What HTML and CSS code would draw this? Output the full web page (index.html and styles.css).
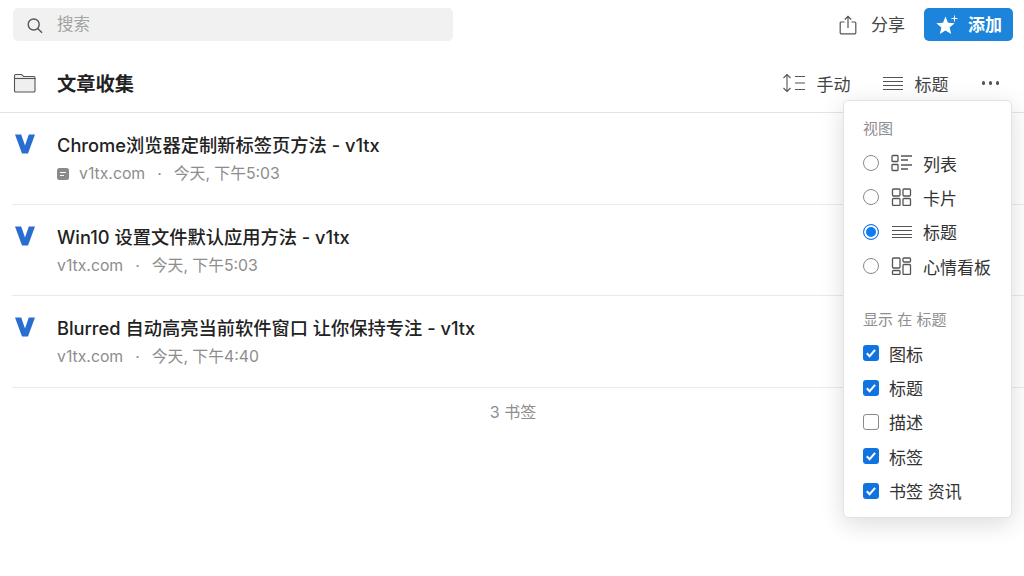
FILE: index.html
```html
<!DOCTYPE html>
<html lang="zh-CN">
<head>
    <meta charset="UTF-8">
    <title>文章收集</title>
    <link rel="stylesheet" href="styles.css">
</head>
<body>
    <div class="topbar">
        <div class="search">
            <svg class="search-icon" width="18" height="18" viewBox="0 0 18 18"><circle cx="7.700" cy="8.500" r="5.500"/><path d="M11.700 12.500l4.300 4.300"/></svg>
            <span class="lift">搜索</span>
        </div>
        <div class="share">
            <svg width="18" height="20" viewBox="0 0 18 20"><path d="M5.500 7H2.200a1 1 0 0 0-1 1v9.800a1 1 0 0 0 1 1h13.600a1 1 0 0 0 1-1V8a1 1 0 0 0-1-1h-3.300"/><path d="M9 13V1.500M5.800 4.500L9 1.300l3.200 3.200"/></svg>
            <span class="lift">分享</span>
        </div>
        <button class="add-btn">
            <svg width="24" height="22" viewBox="0 0 24 22"><path class="star" d="M10.500 2.500l2.500 6.200 6.700.5-5.100 4.300 1.600 6.500-5.700-3.500-5.700 3.500 1.600-6.500L1.300 9.200 8 8.700z"/><path class="plus" d="M19.500 1.500v6M16.500 4.500h6"/></svg>
            <span class="lift">添加</span>
        </button>
    </div>

    <div class="header">
        <svg class="folder" width="24" height="20" viewBox="0 0 24 20"><path d="M1.500 4V2.800a1.300 1.300 0 0 1 1.300-1.300h5.400c.7 0 1 .3 1.400.8l1 1.200h10.100a1.300 1.300 0 0 1 1.300 1.300v12.900a1.300 1.300 0 0 1-1.300 1.300H2.800a1.300 1.300 0 0 1-1.300-1.300z"/><path class="fold" d="M1.500 5.500h21"/></svg>
        <h1>文章收集</h1>
        <div class="tools">
            <div class="tool sort">
                <svg width="24" height="20" viewBox="0 0 24 20"><path d="M5 1.500v17M1.500 5L5 1.500 8.500 5M1.500 15L5 18.500 8.500 15M13 3.500h10M13 10h10M13 16.500h10"/></svg>
                <span>手动</span>
            </div>
            <div class="tool view">
                <svg width="20" height="14" viewBox="0 0 20 14"><path d="M0 1.500h20M0 5.500h20M0 9.500h20M0 13.500h20"/></svg>
                <span>标题</span>
            </div>
            <div class="more"><i></i><i></i><i></i></div>
        </div>
    </div>

    <div class="list">
        <div class="item">
            <svg class="logo" width="20" height="20" viewBox="0 0 20 20"><path d="M0 .5h6.200L10 11.500 13.800.5H20l-7 19H7z"/></svg>
            <div class="item-body">
                <div class="item-title">Chrome浏览器定制新标签页方法 - v1tx</div>
                <div class="item-meta">
                    <svg class="doc" width="12" height="12" viewBox="0 0 12 12"><rect width="12" height="12" rx="2.500"/><path d="M3 4.500h6M3 7.500h4"/></svg>
                    <span>v1tx.com</span><span class="dot">·</span><span>今天, 下午5:03</span>
                </div>
            </div>
        </div>
        <div class="item">
            <svg class="logo" width="20" height="20" viewBox="0 0 20 20"><path d="M0 .5h6.200L10 11.500 13.800.5H20l-7 19H7z"/></svg>
            <div class="item-body">
                <div class="item-title">Win10 设置文件默认应用方法 - v1tx</div>
                <div class="item-meta"><span>v1tx.com</span><span class="dot">·</span><span>今天, 下午5:03</span></div>
            </div>
        </div>
        <div class="item">
            <svg class="logo" width="20" height="20" viewBox="0 0 20 20"><path d="M0 .5h6.200L10 11.500 13.800.5H20l-7 19H7z"/></svg>
            <div class="item-body">
                <div class="item-title">Blurred 自动高亮当前软件窗口 让你保持专注 - v1tx</div>
                <div class="item-meta"><span>v1tx.com</span><span class="dot">·</span><span>今天, 下午4:40</span></div>
            </div>
        </div>
    </div>
    <div class="count">3 书签</div>

    <div class="menu">
        <div class="menu-label">视图</div>
        <div class="opt">
            <span class="radio"></span>
            <svg class="opt-icon" width="22" height="18" viewBox="0 0 22 18"><rect x="1" y="1.500" width="6" height="6" rx=".8"/><rect x="1" y="10.500" width="6" height="6" rx=".8"/><path d="M10 2h11M10 6h7M10 11h11M10 15h7"/></svg>
            <span>列表</span>
        </div>
        <div class="opt">
            <span class="radio"></span>
            <svg class="opt-icon" width="22" height="18" viewBox="0 0 22 18"><rect x="1.500" y="1" width="7.500" height="7" rx="1"/><rect x="12" y="1" width="7.500" height="7" rx="1"/><rect x="1.500" y="10.500" width="7.500" height="7" rx="1"/><rect x="12" y="10.500" width="7.500" height="7" rx="1"/></svg>
            <span>卡片</span>
        </div>
        <div class="opt">
            <span class="radio on"></span>
            <svg class="opt-icon thin" width="22" height="18" viewBox="0 0 22 18"><path d="M1 3.500h20M1 7.500h20M1 11.500h20M1 14.500h20"/></svg>
            <span>标题</span>
        </div>
        <div class="opt">
            <span class="radio"></span>
            <svg class="opt-icon" width="22" height="18" viewBox="0 0 22 18"><rect x="1.500" y="1" width="7.500" height="10" rx="1"/><rect x="1.500" y="13.500" width="7.500" height="4" rx="1"/><rect x="12" y="1" width="7.500" height="4" rx="1"/><rect x="12" y="7.500" width="7.500" height="10" rx="1"/></svg>
            <span>心情看板</span>
        </div>
        <div class="menu-label second">显示 在 标题</div>
        <div class="opt check-opt"><span class="check on"><svg width="16" height="16" viewBox="0 0 16 16"><path d="M3.800 8.300l2.800 2.900 5.500-6.400"/></svg></span><span>图标</span></div>
        <div class="opt check-opt"><span class="check on"><svg width="16" height="16" viewBox="0 0 16 16"><path d="M3.800 8.300l2.800 2.900 5.500-6.400"/></svg></span><span>标题</span></div>
        <div class="opt check-opt"><span class="check"></span><span>描述</span></div>
        <div class="opt check-opt"><span class="check on"><svg width="16" height="16" viewBox="0 0 16 16"><path d="M3.800 8.300l2.800 2.900 5.500-6.400"/></svg></span><span>标签</span></div>
        <div class="opt check-opt"><span class="check on"><svg width="16" height="16" viewBox="0 0 16 16"><path d="M3.800 8.300l2.800 2.900 5.500-6.400"/></svg></span><span>书签 资讯</span></div>
    </div>
</body>
</html>
```

FILE: styles.css
```css
html, body {
    margin: 0;
    height: 100%;
    overflow: hidden;
}
body {
    font-family: Inter, "Noto Sans CJK SC", sans-serif;
    background-color: white;
    color: #1f1f1f;
    position: relative;
}
svg {
    display: block;
    fill: none;
}
.lift {
    margin-bottom: 3px;
}
.topbar {
    display: flex;
    align-items: center;
    padding: 8px 11px 0 13px;
    height: 33px;
}
.search {
    display: flex;
    align-items: center;
    width: 440px;
    height: 33px;
    background-color: #f1f1f1;
    border-radius: 5px;
    color: #a3a3a3;
    font-size: 16.500px;
    padding-left: 13px;
    box-sizing: border-box;
    gap: 13px;
    margin-right: auto;
}
.search-icon {
    stroke: #555;
    stroke-width: 1.400;
}
.share {
    display: flex;
    align-items: center;
    gap: 14px;
    font-size: 17px;
    color: #444;
    margin-right: 19px;
}
.share svg {
    stroke: #555;
    stroke-width: 1.200;
}
.add-btn {
    display: flex;
    align-items: center;
    gap: 9px;
    width: 89px;
    height: 33px;
    padding: 0 0 0 11px;
    border: none;
    border-radius: 5px;
    background-color: #1d84dc;
    color: white;
    font-family: inherit;
    font-size: 17px;
    font-weight: 600;
}
.add-btn .star {
    fill: white;
}
.add-btn .plus {
    stroke: white;
    stroke-width: 1;
}
.header {
    display: flex;
    align-items: center;
    height: 58px;
    padding: 13px 25px 0 13px;
    border-bottom: 1px solid #e4e4e4;
}
.folder {
    stroke: #555;
    stroke-width: 1.100;
    fill: #efefef;
}
.folder .fold {
    fill: none;
}
h1 {
    margin: 0 0 0 20px;
    font-size: 19.300px;
    font-weight: 700;
    color: #222;
}
.tools {
    display: flex;
    align-items: center;
    margin-left: auto;
    font-size: 17px;
    color: #444;
}
.tool {
    display: flex;
    align-items: center;
}
.tool svg {
    stroke: #555;
    stroke-width: 1.100;
}
.sort {
    gap: 11px;
    margin-right: 32px;
}
.view {
    gap: 12px;
    margin-right: 33px;
}
.more {
    display: flex;
    gap: 3.500px;
}
.more i {
    display: block;
    width: 3.500px;
    height: 3.500px;
    border-radius: 50%;
    background-color: #555;
}
.list {
    margin-left: 12px;
}
.item {
    display: flex;
    height: 90.500px;
    border-bottom: 1px solid #e9e9e9;
    padding-left: 3px;
}
.logo {
    fill: #2a6dd0;
    margin-top: 21px;
}
.item-body {
    margin-left: 22px;
    padding-top: 20px;
}
.item-title {
    font-size: 18.250px;
    font-weight: 500;
    line-height: 24px;
    color: #222;
}
.item-meta {
    display: flex;
    align-items: center;
    margin-top: 6px;
    font-size: 15.800px;
    line-height: 22px;
    color: #8d8d8d;
}
.doc {
    fill: #8a8a8a;
    stroke: white;
    margin-right: 10px;
}
.doc rect {
    stroke: none;
}
.dot {
    margin: 0 12px;
}
.count {
    margin-top: 13px;
    padding-left: 2px;
    text-align: center;
    font-size: 16px;
    line-height: 22px;
    color: #8d8d8d;
}
.menu {
    position: absolute;
    left: 843px;
    top: 100px;
    width: 169px;
    height: 418px;
    box-sizing: border-box;
    padding: 18px 19px 0;
    background-color: white;
    border: 1px solid #e2e2e2;
    border-radius: 5px;
    box-shadow: 0 6px 24px rgba(0,0,0,0.14);
    font-size: 17px;
    color: #333;
}
.menu-label {
    font-size: 15px;
    line-height: 20px;
    color: #8e8e8e;
    margin-bottom: 7px;
}
.menu-label.second {
    margin-top: 27px;
    margin-bottom: 6px;
}
.opt {
    display: flex;
    align-items: center;
    height: 34.300px;
    white-space: nowrap;
}
.radio {
    width: 14px;
    height: 14px;
    border: 1px solid #8a8a8a;
    border-radius: 50%;
    margin-right: 12px;
    flex-shrink: 0;
}
.radio.on {
    box-sizing: border-box;
    width: 16px;
    height: 16px;
    border: 1px solid #1a78e6;
    background-color: #0d7bf2;
    box-shadow: inset 0 0 0 2px white;
}
.opt-icon {
    stroke: #555;
    stroke-width: 1.300;
    margin-right: 10px;
}
.opt-icon.thin {
    stroke-width: 1;
}
.check {
    box-sizing: border-box;
    width: 16px;
    height: 16px;
    border: 1px solid #8a8a8a;
    border-radius: 3px;
    margin-right: 10px;
    flex-shrink: 0;
}
.check.on {
    border: none;
    background-color: #0f74e0;
}
.check svg {
    stroke: white;
    stroke-width: 2;
}
```
